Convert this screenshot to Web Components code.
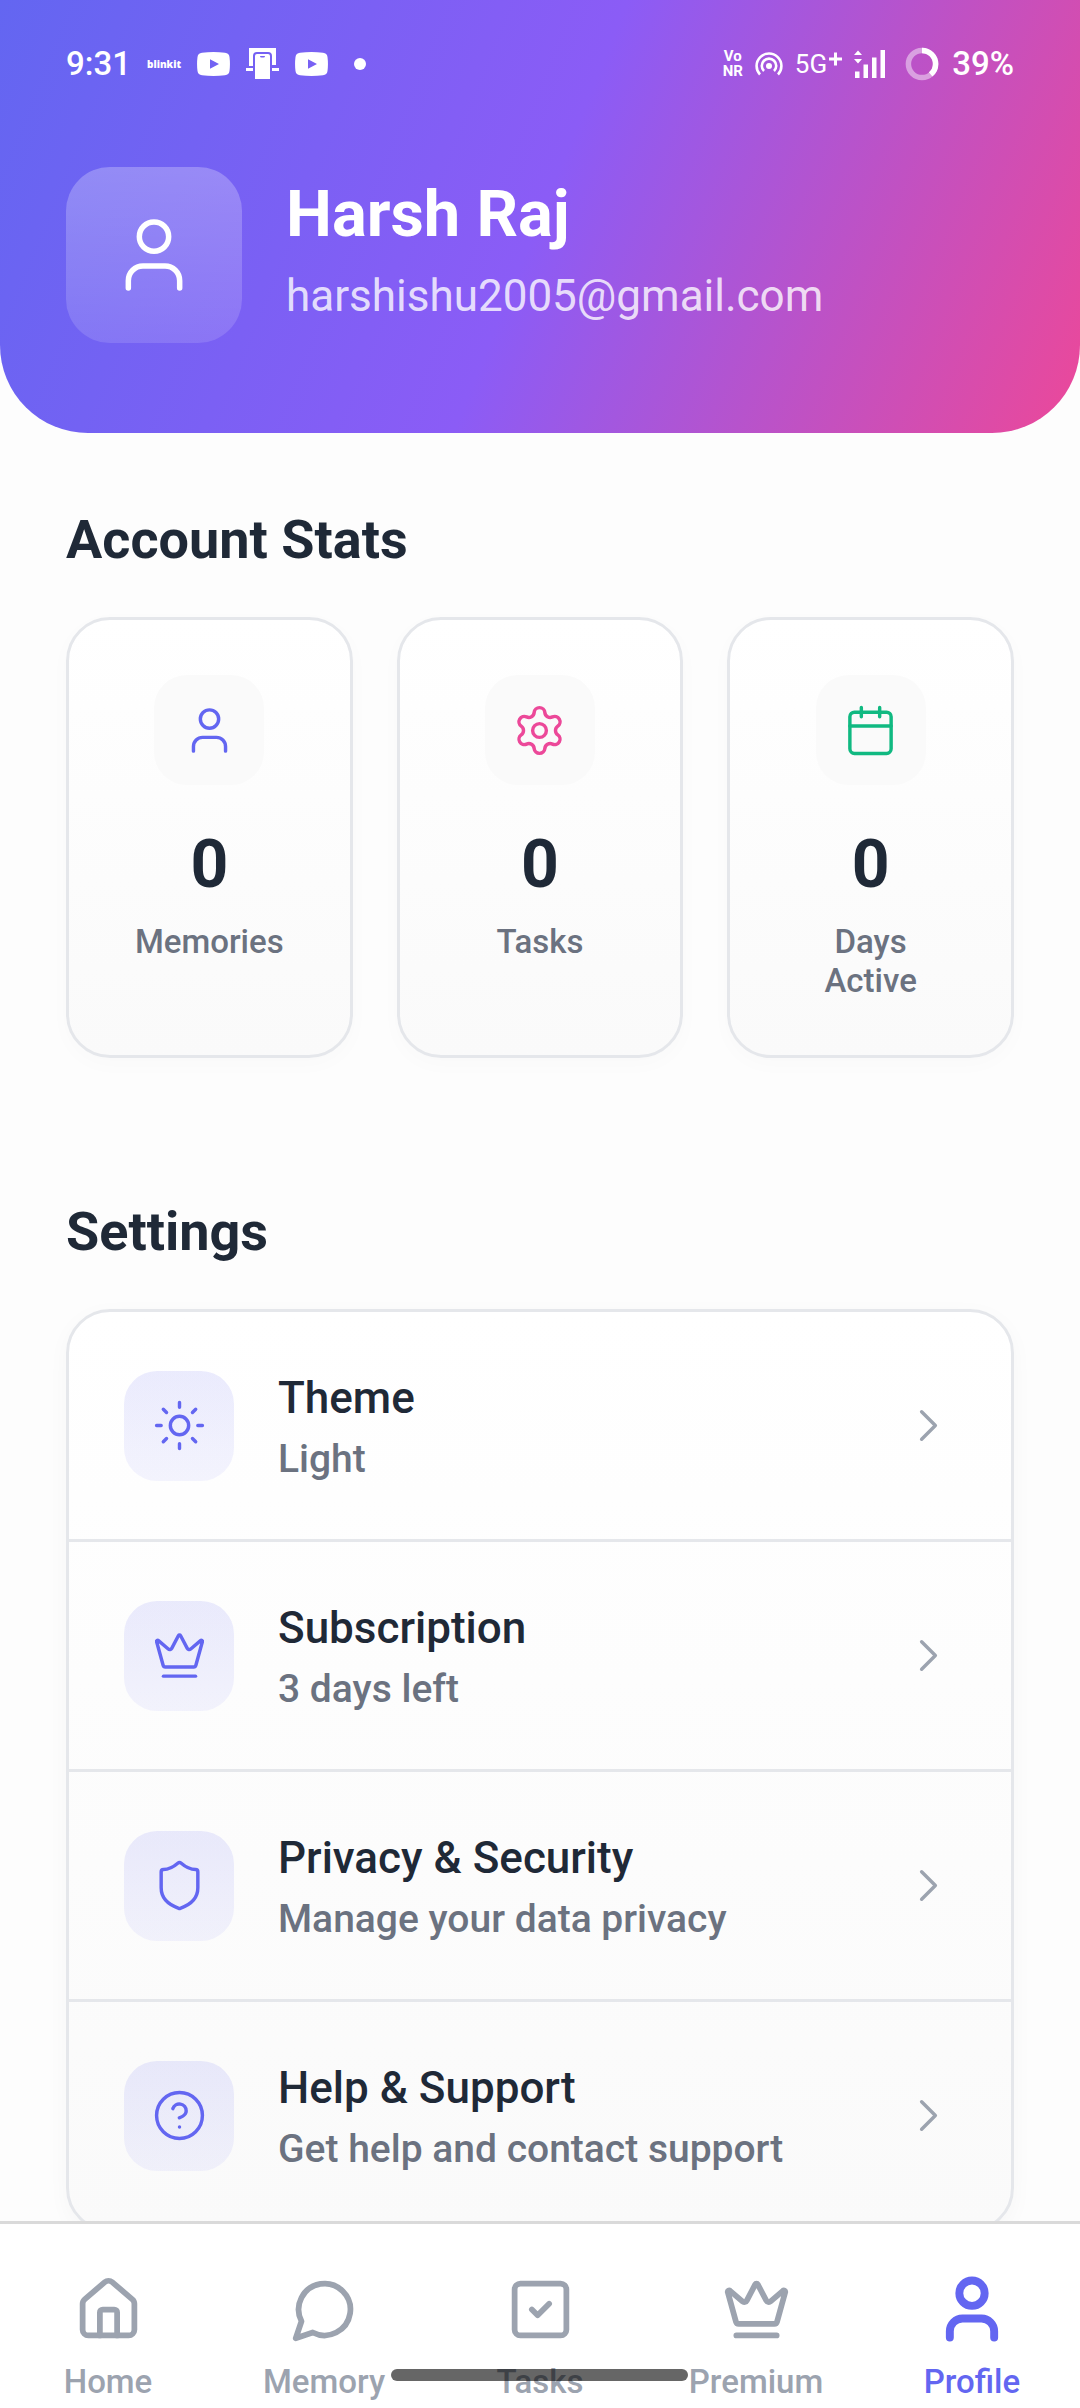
<!DOCTYPE html>
<html lang="en">
<head>
<meta charset="utf-8">
<meta name="viewport" content="width=device-width, initial-scale=1">
<title>Profile</title>
<style>
  html, body { margin: 0; height: 100%; }
  body {
    font-family: Roboto, "Noto Sans", sans-serif;
    color: #1f2937;
    background: #fdfdfd;
    --accent: #6366f1;
    --muted: #6b7280;
    --faint: #9ca3af;
    --line: #e5e7eb;
    --gutter: 66px;
  }
</style>
</head>
<body>
<profile-screen>
  <profile-header name="Harsh Raj" email="harshishu2005@gmail.com"></profile-header>
  <page-section heading="Account Stats">
    <stat-grid>
      <stat-card icon="user" tint="#6366f1" value="0">Memories</stat-card>
      <stat-card icon="settings" tint="#ec4899" value="0">Tasks</stat-card>
      <stat-card icon="calendar" tint="#10b981" value="0">Days Active</stat-card>
    </stat-grid>
  </page-section>
  <page-section heading="Settings">
    <settings-list>
      <settings-row icon="sun" heading="Theme">Light</settings-row>
      <settings-row icon="crown" heading="Subscription">3 days left</settings-row>
      <settings-row icon="shield" heading="Privacy &amp; Security">Manage your data privacy</settings-row>
      <settings-row icon="help" heading="Help &amp; Support">Get help and contact support</settings-row>
    </settings-list>
  </page-section>
  <tab-bar slot="tabs">
    <tab-item icon="house" href="#home">Home</tab-item>
    <tab-item icon="message" href="#memory">Memory</tab-item>
    <tab-item icon="check" href="#tasks">Tasks</tab-item>
    <tab-item icon="crown" href="#premium">Premium</tab-item>
    <tab-item icon="user" href="#profile" active>Profile</tab-item>
  </tab-bar>
</profile-screen>

<script>
const define = (tag, render) => customElements.define(tag, class extends HTMLElement {
  connectedCallback() {
    if (this.shadowRoot) return;
    this.attachShadow({ mode: 'open' }).innerHTML = render(this);
  }
});
const esc = s => (s || '').replace(/&/g, '&amp;').replace(/</g, '&lt;');

const ICONS = {
  user: '<path d="M19 21v-2a4 4 0 0 0-4-4H9a4 4 0 0 0-4 4v2"/><circle cx="12" cy="7" r="4"/>',
  settings: '<path d="M9.671 4.136a2.34 2.34 0 0 1 4.659 0 2.34 2.34 0 0 0 3.319 1.915 2.34 2.34 0 0 1 2.33 4.033 2.34 2.34 0 0 0 0 3.831 2.34 2.34 0 0 1-2.33 4.033 2.34 2.34 0 0 0-3.319 1.915 2.34 2.34 0 0 1-4.659 0 2.34 2.34 0 0 0-3.32-1.915 2.34 2.34 0 0 1-2.33-4.033 2.34 2.34 0 0 0 0-3.831A2.34 2.34 0 0 1 6.35 6.051a2.34 2.34 0 0 0 3.319-1.915"/><circle cx="12" cy="12" r="3"/>',
  calendar: '<path d="M8 2v4M16 2v4M3 10h18"/><rect x="3" y="4" width="18" height="18" rx="2"/>',
  sun: '<circle cx="12" cy="12" r="4"/><path d="M12 2v2M12 20v2M4.93 4.93l1.41 1.41M17.66 17.66l1.41 1.41M2 12h2M20 12h2M6.34 17.66l-1.41 1.41M19.07 4.93l-1.41 1.41"/>',
  crown: '<path d="M11.562 3.266a.5.5 0 0 1 .876 0L15.39 8.87a1 1 0 0 0 1.516.294L21.183 5.5a.5.5 0 0 1 .798.519l-2.834 10.246a1 1 0 0 1-.956.734H5.81a1 1 0 0 1-.957-.734L2.02 6.02a.5.5 0 0 1 .798-.519l4.276 3.664a1 1 0 0 0 1.516-.294z"/><path d="M5 21h14"/>',
  shield: '<path d="M20 13c0 5-3.5 7.5-7.66 8.95a1 1 0 0 1-.67-.01C7.5 20.5 4 18 4 13V6a1 1 0 0 1 1-1c2 0 4.5-1.2 6.24-2.72a1.17 1.17 0 0 1 1.52 0C14.51 3.81 17 5 19 5a1 1 0 0 1 1 1z"/>',
  help: '<circle cx="12" cy="12" r="10"/><path d="M9.09 9a3 3 0 0 1 5.83 1c0 2-3 3-3 3M12 17h.01"/>',
  chevron: '<path d="m9 18 6-6-6-6"/>',
  house: '<path d="M15 21v-8a1 1 0 0 0-1-1h-4a1 1 0 0 0-1 1v8"/><path d="M3 10a2 2 0 0 1 .709-1.528l7-5.999a2 2 0 0 1 2.582 0l7 5.999A2 2 0 0 1 21 10v9a2 2 0 0 1-2 2H5a2 2 0 0 1-2-2z"/>',
  message: '<path d="M7.9 20A9 9 0 1 0 4 16.1L2 22Z"/>',
  check: '<rect x="3" y="3" width="18" height="18" rx="2"/><path d="m9 12 2 2 4-4"/>'
};

define('line-icon', el => `
  <style>
    :host { display: block; flex: none; width: var(--size, 55px); height: var(--size, 55px); }
    svg { display: block; width: 100%; height: 100%; fill: none; stroke: currentColor;
          stroke-linecap: round; stroke-linejoin: round; }
  </style>
  <svg viewBox="0 0 24 24" stroke-width="${el.getAttribute('weight') || '1.5'}" aria-hidden="true">${ICONS[el.getAttribute('name')]}</svg>`);

define('profile-screen', () => `
  <style>
    :host { display: flex; flex-direction: column; height: 100vh; }
    main { flex: 1; min-height: 0; overflow-y: auto; scrollbar-width: none; }
  </style>
  <main><slot></slot></main>
  <slot name="tabs"></slot>`);

const VIDEO = '<svg width="33" height="24" viewBox="0 0 33 24"><path fill="#fff" fill-rule="evenodd" d="M5 .8Q16.500-.6 28 .8 32 1.200 32.500 5 33.400 12 32.500 19 32 22.800 28 23.200 16.500 24.600 5 23.200 1 22.800.5 19-.4 12 .5 5 1 1.200 5 .8ZM13 7.300v9.400l9-4.700Z"/></svg>';

define('status-bar', () => `
  <style>
    :host { display: flex; justify-content: space-between; align-items: center;
            height: 128px; padding: 0 var(--gutter); color: #fff; }
    .group { display: flex; align-items: center; gap: 16px; }
    .group.end { gap: 12px; }
    svg { display: block; flex: none; }
    .clock { font-size: 33px; line-height: 40px; font-weight: 500; }
    .brand { font: 800 10px/16px "Open Sans", sans-serif; }
    .vonr { display: flex; flex-direction: column; font-size: 15px; line-height: 15px; font-weight: 700; text-align: center; }
    .net { display: flex; align-items: center; gap: 2px; font-size: 26px; line-height: 36px; }
    .dot { width: 12px; height: 12px; border-radius: 50%; background: #fff; margin-left: 10px; }
  </style>
  <div class="group">
    <span class="clock">9:31</span>
    <span class="brand">blinkit</span>
    ${VIDEO}
    <svg width="33" height="32" viewBox="0 0 33 32" fill="#fff">
      <path d="M3 0h27v17h-4V8q0-4-4-4H11Q7 4 7 8v10H3Z"/>
      <path d="M0 20h7v3H0ZM26 20h7v3H26Z"/>
      <path fill-rule="evenodd" d="M11 6h11q2 0 2 2v23H9V8q0-2 2-2ZM14 8q0 1.500 1.500 1.500h2Q19 9.500 19 8Z"/>
    </svg>
    ${VIDEO}
    <span class="dot"></span>
  </div>
  <div class="group end">
    <span class="vonr"><span>Vo</span><span>NR</span></span>
    <svg width="28" height="24" viewBox="0 0 28 24" fill="none" stroke="#fff" stroke-width="2.600">
      <path d="M5 22.500A12.400 12.400 0 1 1 23 22.500M9 19A7.200 7.200 0 1 1 19 19"/>
      <circle cx="14" cy="14" r="3" fill="#fff" stroke="none"/>
    </svg>
    <span class="net">5G<svg width="13" height="36" viewBox="0 0 13 36" stroke="#fff" stroke-width="3"><path d="M0 13h13M6.500 6.500v13"/></svg></span>
    <svg width="32" height="28" viewBox="0 0 32 28" fill="#fff">
      <path d="M0 5 4 .5 8 5ZM0 9h8l-4 4.500ZM1 21.500h4.500V28H1ZM9.500 14.500H14V28H9.500ZM18 7.500h4.500V28H18ZM26.500 0H31v28h-4.500Z"/>
    </svg>
    <svg width="42" height="34" viewBox="-7 0 42 34" fill="none" stroke-width="5.500">
      <circle cx="17" cy="17" r="13.600" stroke="#fff" stroke-opacity=".45"/>
      <circle cx="17" cy="17" r="13.600" stroke="#fff" pathLength="100" stroke-dasharray="39 61" transform="rotate(-90 17 17)"/>
    </svg>
    <span class="clock">39%</span>
  </div>`);

define('profile-header', el => `
  <style>
    :host { display: block; border-radius: 0 0 88px 88px;
            background: linear-gradient(112deg, #6366f1, #8b5cf6 50%, #ec4899); }
    .row { display: flex; align-items: center; gap: 44px; padding: 39px var(--gutter) 90px; }
    .avatar { display: flex; align-items: center; justify-content: center; flex: none;
              width: 176px; height: 176px; border-radius: 44px; color: #fff; --size: 88px;
              background: linear-gradient(rgba(255,255,255,.26), rgba(255,255,255,.13)); }
    .who { padding-bottom: 10px; }
    h1 { margin: 0 0 12px; font-size: 65px; line-height: 80px; font-weight: 700; color: #fff; }
    p { margin: 0; font-size: 44px; line-height: 60px; color: rgba(255,255,255,.8); }
  </style>
  <header>
    <status-bar></status-bar>
    <div class="row">
      <div class="avatar"><line-icon name="user"></line-icon></div>
      <div class="who">
        <h1>${esc(el.getAttribute('name'))}</h1>
        <p>${esc(el.getAttribute('email'))}</p>
      </div>
    </div>
  </header>`);

define('page-section', el => `
  <style>
    :host { display: block; padding: 74px var(--gutter) 67px; }
    h2 { margin: 0 0 44px; font-size: 54px; line-height: 66px; font-weight: 700; }
  </style>
  <section>
    <h2>${esc(el.getAttribute('heading'))}</h2>
    <slot></slot>
  </section>`);

define('stat-grid', () => `
  <style>
    :host { display: grid; grid-template-columns: repeat(3, minmax(0, 1fr)); gap: 44px; }
  </style>
  <slot></slot>`);

define('stat-card', el => `
  <style>
    :host { display: flex; flex-direction: column; align-items: center; padding: 55px;
            border: 3px solid var(--line); border-radius: 44px;
            background: linear-gradient(#fff, #fafafa); box-shadow: 0 6px 22px rgba(0,0,0,.02); }
    .tile { display: flex; align-items: center; justify-content: center; width: 110px; height: 110px;
            border-radius: 33px; background: #fafafa; color: ${el.getAttribute('tint')}; }
    strong { margin: 44px 0 21px; font-size: 66px; line-height: 72px; font-weight: 700; }
    .label { font-size: 33px; line-height: 39px; font-weight: 500; color: var(--muted); text-align: center; }
  </style>
  <div class="tile"><line-icon name="${el.getAttribute('icon')}"></line-icon></div>
  <strong>${esc(el.getAttribute('value'))}</strong>
  <span class="label"><slot></slot></span>`);

define('settings-list', () => `
  <style>
    :host { display: block; border: 3px solid var(--line); border-radius: 44px; overflow: hidden;
            background: linear-gradient(#fff, #fafafa); box-shadow: 0 6px 22px rgba(0,0,0,.03); }
    ::slotted(:not(:last-child)) { border-bottom: 3px solid var(--line); }
  </style>
  <slot></slot>`);

define('settings-row', el => `
  <style>
    :host { display: block; }
    button { all: unset; box-sizing: border-box; display: flex; align-items: center; gap: 44px;
             width: 100%; min-height: 227px; padding: 55px; cursor: pointer; }
    .tile { display: flex; align-items: center; justify-content: center; flex: none; width: 110px; height: 110px;
            border-radius: 33px; color: var(--accent);
            background: linear-gradient(rgba(99,102,241,.13), rgba(99,102,241,.07)); }
    .text { flex: 1; display: flex; flex-direction: column; gap: 10px; }
    .heading { font-size: 44px; line-height: 56px; font-weight: 500; }
    .detail { font-size: 39px; line-height: 46px; font-weight: 500; color: var(--muted); }
    .chevron { color: var(--faint); }
  </style>
  <button type="button">
    <span class="tile"><line-icon name="${el.getAttribute('icon')}"></line-icon></span>
    <span class="text">
      <span class="heading">${esc(el.getAttribute('heading'))}</span>
      <span class="detail"><slot></slot></span>
    </span>
    <line-icon class="chevron" name="chevron"></line-icon>
  </button>`);

define('tab-bar', () => `
  <style>
    :host { display: block; flex: none; position: relative; background: #fff; border-top: 3px solid #dadada; }
    nav { display: flex; padding: 47px 0 6px; }
    ::slotted(*) { flex: 1; }
    /* The system gesture handle floats over the tabs. */
    .handle { position: absolute; left: 50%; bottom: 27px; width: 297px; height: 12px; margin-left: -149px;
              border-radius: 6px; background: rgba(0,0,0,.6); }
  </style>
  <nav><slot></slot></nav>
  <div class="handle"></div>`);

define('tab-item', el => {
  const active = el.hasAttribute('active');
  return `
  <style>
    :host { display: block; }
    a { display: flex; flex-direction: column; align-items: center; gap: 15px; text-decoration: none;
        font-size: 33px; line-height: 40px; font-weight: 500; color: ${active ? 'var(--accent)' : 'var(--faint)'}; }
    .icon { display: flex; align-items: center; height: 76px; --size: ${active ? '76px' : '69px'}; }
  </style>
  <a href="${el.getAttribute('href')}"${active ? ' aria-current="page"' : ''}>
    <span class="icon"><line-icon name="${el.getAttribute('icon')}" weight="${active ? 2.5 : 2}"></line-icon></span>
    <span><slot></slot></span>
  </a>`;
});
</script>
</body>
</html>
